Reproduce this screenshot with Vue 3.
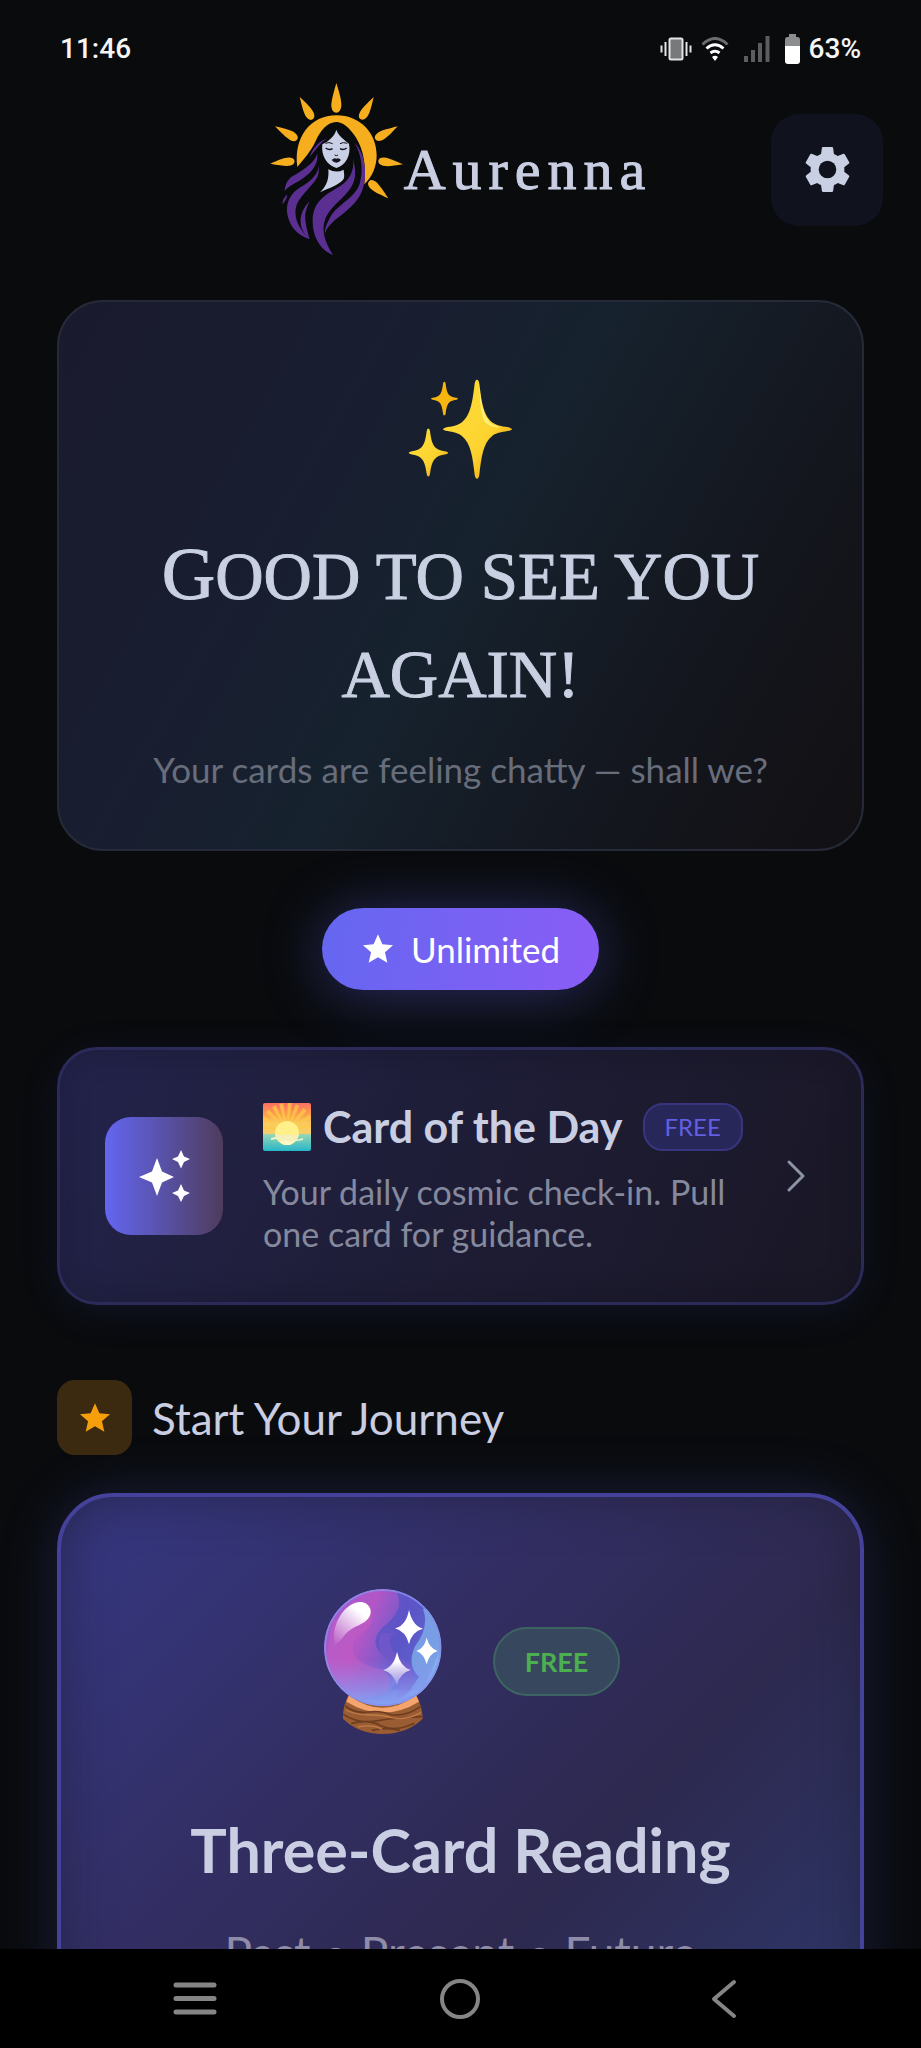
<script setup>
const rays = [
  'translate(262 38)',
  'translate(152 80) rotate(-30) scale(.87)',
  'translate(374 80) rotate(30) scale(.87)',
  'translate(78 168) rotate(-60) scale(.87)',
  'translate(446 168) rotate(60) scale(.87)',
  'translate(64 280) rotate(-96) scale(.82)',
  'translate(462 282) rotate(98) scale(.84)',
  'translate(418 384) rotate(131) scale(.87)',
]
const sunBeams = [-80, -62, -44, -28, -12, 6, 22, 40, 58, 76]
const starPath = 'M12 1.6l3.1 7 7.5.7-5.7 5 1.7 7.4L12 17.8l-6.6 3.9 1.7-7.4-5.7-5 7.5-.7z'
</script>

<template>
  <div class="screen">
    <div class="status">
      <span>11:46</span>
      <div class="status-icons">
        <svg class="vibrate" viewBox="0 0 32 24" aria-hidden="true">
          <rect x="9.5" y="1.5" width="13" height="21" rx="1.5" fill="#77797b" stroke="#e4e4e4" stroke-width="2" />
          <path d="M5.5 5v14M26.500 5v14M1.500 8.500v7M30.500 8.500v7" stroke="#e4e4e4" stroke-width="2" />
        </svg>
        <svg class="wifi" viewBox="0 0 28 24" fill="none" aria-hidden="true">
          <path d="M1.500 7.500Q14-4.500 26.500 7.500" stroke="#6a6c6e" stroke-width="3" />
          <path d="M5.500 11.500Q14 4 22.500 11.500M9.500 16Q14 12.500 18.500 16" stroke="#fff" stroke-width="3" />
          <path d="M11 20q3-2.500 6 0l-3 4z" fill="#fff" />
        </svg>
        <svg class="signal" viewBox="0 0 26 26" fill="#5b5d5f" aria-hidden="true">
          <path d="M0 20h4v6H0zM7 14h4v12H7zM14 7h4v19h-4zM21.500 0h4v26h-4z" />
        </svg>
        <svg class="battery" viewBox="0 0 15 30" aria-hidden="true">
          <path d="M4 0h7v3h1.500Q15 3 15 6v6H0V6q0-3 2.500-3H4z" fill="#8b8d8e" />
          <path d="M0 12h15v15q0 3-3 3H3q-3 0-3-3z" fill="#fff" />
        </svg>
        <span>63%</span>
      </div>
    </div>

    <main class="content">
      <header class="header">
        <div class="brand">
          <svg class="brand-mark" viewBox="60 35 405 525" role="img" aria-label="Aurenna logo">
            <g fill="#f6ae1e">
              <path v-for="ray in rays" :key="ray" :transform="ray" d="M0 0C10 32 16 52 15 70Q12 89 0 89-13 89-15 70C-15 52-9 32 0 0Z" />
              <path d="M145 290C133 200 185 135 262 135C335 135 383 190 383 255C383 290 368 322 346 342C352 290 345 240 320 200C300 170 280 155 262 155C235 155 215 180 200 212C185 245 165 265 145 290Z" />
            </g>
            <g fill="#c9d0e6">
              <path d="M262 178C268 197 285 207 300 220C307 255 290 284 262 293C232 284 216 255 220 222C240 212 256 198 262 178Z" />
              <path d="M238 297Q262 310 284 298C285 315 290 325 275 335C255 350 235 355 213 366C235 345 240 325 238 297Z" />
            </g>
            <g fill="none" stroke="#15131f" stroke-width="3">
              <path d="M229 219q11-5 22 1M273 220q10-6 22-1" />
              <path d="M230 233q10 8 21 2M273 235q10 6 20-2" stroke-width="4" />
              <path d="M257 254q5 4 10 0" />
            </g>
            <path d="M248 269q7-7 14-4 7-3 14 4-14 17-28 0z" fill="#17121f" />
            <g fill="#5b2f91">
              <path d="M232 206C212 210 190 235 182 260C200 240 212 220 232 206Z" />
              <path d="M205 250C195 280 160 300 130 318C115 328 108 345 107 362C120 345 150 335 170 318C197 297 207 275 205 250Z" />
              <path d="M208 285C210 310 185 335 155 350C125 368 112 395 114 425C118 465 145 495 182 507C155 480 135 450 140 415C145 380 190 350 205 320Q212 305 208 285Z" />
              <path d="M115 372Q100 385 100 402C110 392 114 384 115 372Z" />
              <path d="M182 393C160 415 150 440 157 470C162 485 170 497 182 507C175 480 165 450 170 425Q174 408 182 393Z" />
              <path d="M312 265C318 300 300 335 260 355C220 378 192 400 191 450C190 500 215 540 252 554C228 515 214 480 231 440C251 400 300 375 314 335C322 310 318 290 312 265Z" />
              <path d="M316 218C338 250 344 300 332 340C317 385 264 402 244 440C232 462 226 478 228 490C236 458 275 440 305 410C340 380 350 340 348 300C347 265 335 235 316 218Z" />
            </g>
          </svg>
          <span class="brand-name">Aurenna</span>
        </div>
        <button class="settings" type="button" aria-label="Settings">
          <svg viewBox="2 2 20 20" aria-hidden="true">
            <path fill="#c9d0e4" d="M19.430 12.980c.04-.32.07-.64.07-.98s-.03-.66-.07-.98l2.110-1.650c.19-.15.24-.42.12-.64l-2-3.460c-.12-.22-.39-.3-.61-.22l-2.490 1c-.52-.4-1.080-.73-1.690-.98l-.38-2.650C14.460 2.180 14.250 2 14 2h-4c-.25 0-.46.18-.49.42l-.38 2.650c-.61.25-1.170.59-1.690.98l-2.490-1c-.23-.09-.49 0-.61.22l-2 3.460c-.13.22-.07.49.12.64l2.110 1.650c-.04.32-.07.65-.07.98s.03.66.07.98l-2.110 1.650c-.19.15-.24.42-.12.64l2 3.460c.12.22.39.3.61.22l2.490-1c.52.4 1.080.73 1.690.98l.38 2.650c.03.24.24.42.49.42h4c.25 0 .46-.18.49-.42l.38-2.650c.61-.25 1.170-.59 1.690-.98l2.490 1c.23.09.49 0 .61-.22l2-3.460c.12-.22.07-.49-.12-.64z" />
            <circle cx="12" cy="12" r="3.900" fill="#10131e" />
          </svg>
        </button>
      </header>

      <section class="hero">
        <svg class="sparkles" viewBox="55 55 315 305" aria-hidden="true">
          <defs>
            <linearGradient id="gold" x1="0" y1="0" x2="1" y2="1">
              <stop offset=".4" stop-color="#fdd835" />
              <stop offset=".62" stop-color="#fdd22f" />
              <stop offset=".75" stop-color="#f4b91e" />
            </linearGradient>
          </defs>
          <path d="M262 60q5 0 7 12c6 45 10 95 40 117 15 10 35 11 50 14q8 3 8 5t-8 5c-15 3-35 4-50 14-30 22-34 70-40 118q-2 12-7 12t-7-12c-6-48-10-96-40-118-15-10-30-11-47-14q-8-3-8-5t8-5c17-3 32-4 47-14 30-22 34-72 40-117q2-12 7-12z" fill="url(#gold)" />
          <path d="M269 82c6 45 10 90 39 112l25 10c-25-2-42-7-50-22-10-25-12-60-14-100z" fill="#fff176" />
          <path d="M116 206q4 0 5 8c3 22 6 42 20 52 8 6 18 7 28 9q7 2 7 4t-7 4c-10 2-20 3-28 9-14 10-17 29-20 50q-1 8-5 8t-5-8c-3-21-6-40-20-50-8-6-18-7-27-9q-7-2-7-4t7-4c9-2 19-3 27-9 14-10 17-30 20-52q1-8 5-8z" fill="url(#gold)" />
          <path d="M164 66q3 0 4 6c2 16 4 29 13 36 6 4 13 5 19 6q5 1 5 3t-5 3c-6 1-13 2-19 6-9 7-11 20-13 35q-1 6-4 6t-4-6c-2-15-4-28-13-35-6-4-12-5-18-6q-5-1-5-3t5-3c6-1 12-2 18-6 9-7 11-20 13-36q1-6 4-6z" fill="#f9b50f" />
        </svg>
        <h1>Good to see you again!</h1>
        <p>Your cards are feeling chatty — shall we?</p>
      </section>

      <div class="plan">
        <svg viewBox="0 0 24 24" aria-hidden="true"><path :d="starPath" fill="#fff" /></svg>
        <span>Unlimited</span>
      </div>

      <a class="daily" href="#card-of-the-day">
        <span class="daily-icon">
          <svg viewBox="0 0 52 52" aria-hidden="true">
            <path fill="#fff" d="M19 8l5 13.500L36 27l-12 5.500L19 46l-5-13.500L1 27l13-5.500zM43 0l3 6.500 6 2.500-6 3-3 6.500-3-6.500-6-3 6-2.500zM43 34l3 6.500 6 2.500-6 3-3 6-3-6-6-3 6-2.500z" />
          </svg>
        </span>
        <span class="daily-text">
          <span class="daily-title">
            <svg class="sunrise" viewBox="0 0 48 48" aria-hidden="true">
              <defs>
                <linearGradient id="sky" x1="0" y1="0" x2="0" y2="1">
                  <stop offset="0" stop-color="#fb6f62" />
                  <stop offset=".4" stop-color="#fba64a" />
                  <stop offset=".64" stop-color="#f8cc66" />
                </linearGradient>
                <linearGradient id="sea" x1="0" y1="0" x2="0" y2="1">
                  <stop offset="0" stop-color="#9bd6b4" />
                  <stop offset="1" stop-color="#26b6c9" />
                </linearGradient>
                <clipPath id="tile"><rect width="48" height="48" rx="2" /></clipPath>
                <clipPath id="above"><rect width="48" height="31" /></clipPath>
              </defs>
              <g clip-path="url(#tile)">
                <rect width="48" height="32" fill="url(#sky)" />
                <g clip-path="url(#above)">
                  <path v-for="angle in sunBeams" :key="angle" d="M23.500 28L22 0h4l-1.500 28z" :transform="`rotate(${angle} 24 28)`" fill="#fdc945" opacity=".75" />
                </g>
                <rect y="31" width="48" height="17" fill="url(#sea)" />
                <circle cx="24" cy="30" r="12" fill="#fff08a" />
                <path d="M8 35q8-3 16 0t16 0v2q-8 2-16 0t-16 0z" fill="#e9f4ce" />
                <path d="M12 32h24l-5 7H17z" fill="#f4efbb" />
                <path d="M16 38h16l-5 4h-6z" fill="#fff7c5" />
              </g>
            </svg>
            <strong>Card of the Day</strong>
            <span class="tag">FREE</span>
          </span>
          <span class="daily-desc">Your daily cosmic check-in. Pull one card for guidance.</span>
        </span>
        <svg class="chevron" viewBox="0 0 40 40" fill="none" aria-hidden="true">
          <path d="M13 6l14 14-14 14" stroke="#8d93a6" stroke-width="3" stroke-linecap="round" stroke-linejoin="round" />
        </svg>
      </a>

      <div class="section-head">
        <span class="section-icon">
          <svg viewBox="0 0 24 24" aria-hidden="true"><path :d="starPath" fill="#f79f0b" /></svg>
        </span>
        <h2>Start Your Journey</h2>
      </div>

      <a class="reading" href="#three-card-reading">
        <span class="reading-top">
          <svg class="ball" viewBox="34 80 480 444" aria-hidden="true">
            <defs>
              <linearGradient id="orb" x1="0" y1=".3" x2="1" y2=".7">
                <stop offset="0" stop-color="#a35bd0" />
                <stop offset=".3" stop-color="#b356c6" />
                <stop offset=".6" stop-color="#6d5bcb" />
                <stop offset="1" stop-color="#86b9f2" />
              </linearGradient>
              <linearGradient id="floor" x1="0" y1="0" x2="0" y2="1">
                <stop offset=".6" stop-color="#8f8cf0" stop-opacity="0" />
                <stop offset="1" stop-color="#86a5f5" />
              </linearGradient>
              <linearGradient id="shine" x1=".7" y1="0" x2="0" y2="1">
                <stop offset=".15" stop-color="#fff" />
                <stop offset="1" stop-color="#fff" stop-opacity="0" />
              </linearGradient>
              <linearGradient id="fade" x1="0" y1="0" x2="0" y2="1">
                <stop offset=".3" stop-color="#fff" />
                <stop offset="1" stop-color="#c8b4ec" stop-opacity=".5" />
              </linearGradient>
              <clipPath id="globe"><circle cx="279" cy="262" r="176" /></clipPath>
            </defs>
            <path d="M178 400Q158 440 160 475Q205 520 279 521Q355 519 399 475Q398 435 377 400Z" fill="#9a5c32" />
            <path d="M178 405Q278 480 379 405L388 424Q280 490 170 424Z" fill="#f4a46c" />
            <path d="M167 437q28 23 68 18t72 9q46 4 85-25M161 462q45 30 105 19t133-12M185 490q48-15 89 6t100-7M246 510q45-10 85 0" fill="none" stroke="#6e3d20" stroke-width="5" />
            <path d="M168 449q35 16 72 15t66 8q45 9 87-15M205 500q40-9 73 7" fill="none" stroke="#c27b48" stroke-width="4" />
            <g clip-path="url(#globe)">
              <circle cx="279" cy="262" r="176" fill="url(#orb)" />
              <path d="M318 86C345 145 315 170 275 205C235 250 270 280 305 305C340 330 330 360 300 390L400 390L460 250L430 100Z" fill="#5553c5" opacity=".75" />
              <path d="M400 145Q420 200 376 258Q350 315 388 350L345 410L460 390V150Z" fill="#82b6ef" opacity=".72" />
              <path d="M340 215Q290 215 302 255Q310 285 345 300Q385 330 365 390L310 430Q350 350 305 316Q250 275 275 220Z" fill="#7658ca" opacity=".7" />
              <path d="M240 145Q262 190 215 220Q175 245 198 290Q225 320 270 325Q320 345 285 400L200 420L105 320L130 180Z" fill="#c45cc3" opacity=".55" />
              <circle cx="279" cy="262" r="176" fill="url(#floor)" />
              <path d="M135 255C125 205 150 145 197 127C230 117 253 143 239 170C224 196 190 194 167 222Q150 245 135 255Z" fill="url(#shine)" />
              <circle cx="279" cy="262" r="173" fill="none" stroke="#8790eb" stroke-width="6" opacity=".8" />
            </g>
            <path d="M358 148q10 48 42 57-34 8-42 47-9-39-42-48 34-9 42-56zM411 232q8 32 33 40-26 8-33 40-8-32-31-40 24-8 31-40z" fill="#fff" />
            <path d="M322 274q9 45 41 55-33 9-41 46-9-37-42-46 33-9 42-55z" fill="url(#fade)" />
          </svg>
          <span class="pill">FREE</span>
        </span>
        <strong class="reading-title">Three-Card Reading</strong>
        <span class="reading-sub">Past • Present • Future</span>
      </a>
    </main>

    <nav class="nav" aria-label="System navigation">
      <button type="button" aria-label="Recent apps">
        <svg viewBox="0 0 44 44" aria-hidden="true"><path d="M3 8h38M3 21.500h38M3 35h38" stroke="#858585" stroke-width="5" stroke-linecap="round" /></svg>
      </button>
      <button type="button" aria-label="Home">
        <svg viewBox="0 0 44 44" aria-hidden="true"><circle cx="22" cy="22" r="18" fill="none" stroke="#858585" stroke-width="4" /></svg>
      </button>
      <button type="button" aria-label="Back">
        <svg viewBox="0 0 44 44" fill="none" aria-hidden="true"><path d="M30 5L10 22l20 17" stroke="#858585" stroke-width="4" stroke-linecap="round" stroke-linejoin="round" /></svg>
      </button>
    </nav>
  </div>
</template>

<style>
body {
  margin: 0;
  background: #090b0d;
}
</style>

<style scoped>
* {
  box-sizing: border-box;
}

.screen {
  display: flex;
  flex-direction: column;
  height: 100vh;
  background: #090b0d;
  color: #c9cee3;
  font-family: Lato, "Liberation Sans", sans-serif;
}

svg {
  display: block;
  flex: none;
}

h1,
h2,
p {
  margin: 0;
  font-weight: 400;
}

button {
  padding: 0;
  border: 0;
  cursor: pointer;
}

a {
  color: inherit;
  text-decoration: none;
}

.status {
  display: flex;
  flex: none;
  align-items: center;
  justify-content: space-between;
  padding: 29px 60px 11px;
  color: #f5f5f5;
  font: 500 28px/40px Roboto, sans-serif;
}

.status-icons {
  display: flex;
  align-items: center;
  gap: 9px;
}

.vibrate {
  width: 32px;
  height: 24px;
}

.wifi {
  width: 28px;
  height: 24px;
}

.signal {
  width: 26px;
  height: 26px;
  margin-left: 6px;
}

.battery {
  width: 15px;
  height: 30px;
  margin-left: 6px;
}

.content {
  flex: 1;
  min-height: 0;
  overflow-y: auto;
  scrollbar-width: none;
  padding: 0 57px 57px;
}

.header {
  display: grid;
  grid-template-columns: 1fr auto 1fr;
  align-items: center;
  margin: 0 -19px;
  padding: 2px 0 43px;
}

.brand {
  display: flex;
  grid-column: 2;
  align-items: center;
}

.brand-mark {
  width: 135px;
  height: 175px;
}

.brand-name {
  font: 400 58px/72px "Liberation Serif", serif;
  letter-spacing: 7px;
  -webkit-text-stroke: 1px currentColor;
}

.settings {
  display: grid;
  place-items: center;
  justify-self: end;
  width: 112px;
  height: 112px;
  border-radius: 28px;
  background: #10131e;
}

.settings svg {
  width: 45px;
  height: 45px;
}

.hero {
  display: flex;
  flex-direction: column;
  align-items: center;
  padding: 76px 70px 58px;
  border: 2px solid #262a38;
  border-radius: 46px;
  background: linear-gradient(120deg, #1a1a2e 0%, #191d30 28%, #16222e 50%, #14171f 74%, #121013 100%);
  text-align: center;
}

.sparkles {
  width: 105px;
  height: 102px;
}

.hero h1 {
  margin-top: 45px;
  color: #c8d0e2;
  font: 400 67px/98px "Liberation Serif", serif;
  text-transform: uppercase;
  -webkit-text-stroke: 1px currentColor;
}

.hero h1::first-letter {
  font-size: 74px;
}

.hero p {
  margin-top: 24px;
  color: #686d7c;
  font-size: 35px;
  line-height: 44px;
}

.plan {
  display: flex;
  align-items: center;
  gap: 16px;
  width: fit-content;
  height: 82px;
  margin: 57px auto;
  padding: 0 39px;
  border-radius: 41px;
  background: linear-gradient(100deg, #6467f1, #8b5cf6);
  box-shadow: 0 4px 60px rgba(99, 102, 241, 0.38);
  color: #fff;
  font-size: 35px;
}

.plan svg {
  width: 34px;
  height: 34px;
}

.daily {
  display: flex;
  align-items: center;
  gap: 20px;
  min-height: 258px;
  padding: 45px;
  border: 3px solid #2c2a58;
  border-radius: 40px;
  background: linear-gradient(115deg, #23234c 0%, #1f1e39 42%, #191724 100%);
  box-shadow: 0 8px 40px rgba(99, 102, 241, 0.1), inset 0 0 30px rgba(10, 12, 18, 0.25);
}

.daily-icon {
  display: grid;
  flex: none;
  place-items: center;
  width: 118px;
  height: 118px;
  border-radius: 26px;
  background: linear-gradient(90deg, #6366f1, #4e3c5c);
}

.daily-icon svg {
  width: 52px;
  height: 52px;
}

.daily-text {
  flex: 1;
  margin-left: 20px;
}

.daily-title {
  display: flex;
  align-items: center;
  height: 60px;
  margin-bottom: 14px;
}

.sunrise {
  width: 48px;
  height: 48px;
}

.daily-title strong {
  margin: 0 20px 0 12px;
  font-size: 43px;
  line-height: 48px;
  white-space: nowrap;
}

.tag {
  padding: 0 20px;
  border: 2px solid #38357e;
  border-radius: 20px;
  background: #28275a;
  color: #625fe0;
  font-size: 24px;
  line-height: 44px;
}

.daily-desc {
  display: block;
  color: #85899d;
  font-size: 34px;
  line-height: 42px;
}

.chevron {
  width: 40px;
  height: 40px;
}

.section-head {
  display: flex;
  align-items: center;
  gap: 20px;
  margin: 75px 0 38px;
}

.section-icon {
  display: grid;
  place-items: center;
  width: 75px;
  height: 75px;
  border-radius: 18px;
  background: #3b2a10;
}

.section-icon svg {
  width: 34px;
  height: 34px;
}

.section-head h2 {
  font-size: 44px;
  line-height: 48px;
}

.reading {
  display: flex;
  flex-direction: column;
  align-items: center;
  min-height: 620px;
  padding: 90px 40px 60px;
  border: 4px solid #45429b;
  border-radius: 56px;
  background: linear-gradient(135deg, #35357c 8%, #322e62 38%, #2d294f 62%, #2e3566 90%);
  box-shadow: 0 0 60px rgba(99, 102, 241, 0.2), inset 0 0 50px rgba(26, 26, 40, 0.5);
}

.reading-top {
  display: flex;
  align-items: center;
  gap: 32px;
}

.ball {
  width: 160px;
  height: 148px;
}

.pill {
  padding: 0 30px;
  border: 2px solid #3d6463;
  border-radius: 35px;
  background: #37475d;
  color: #4caf50;
  font-size: 27px;
  font-weight: 700;
  line-height: 65px;
}

.reading-title {
  margin-top: 79px;
  font-size: 61px;
  line-height: 72px;
}

.reading-sub {
  margin-top: 43px;
  color: #8e8ca8;
  font-size: 46px;
  line-height: 48px;
}

.nav {
  display: flex;
  flex: none;
  align-items: center;
  justify-content: space-around;
  height: 99px;
  padding: 0 62px;
  background: #000;
}

.nav button {
  background: none;
}

.nav svg {
  width: 44px;
  height: 44px;
}
</style>
